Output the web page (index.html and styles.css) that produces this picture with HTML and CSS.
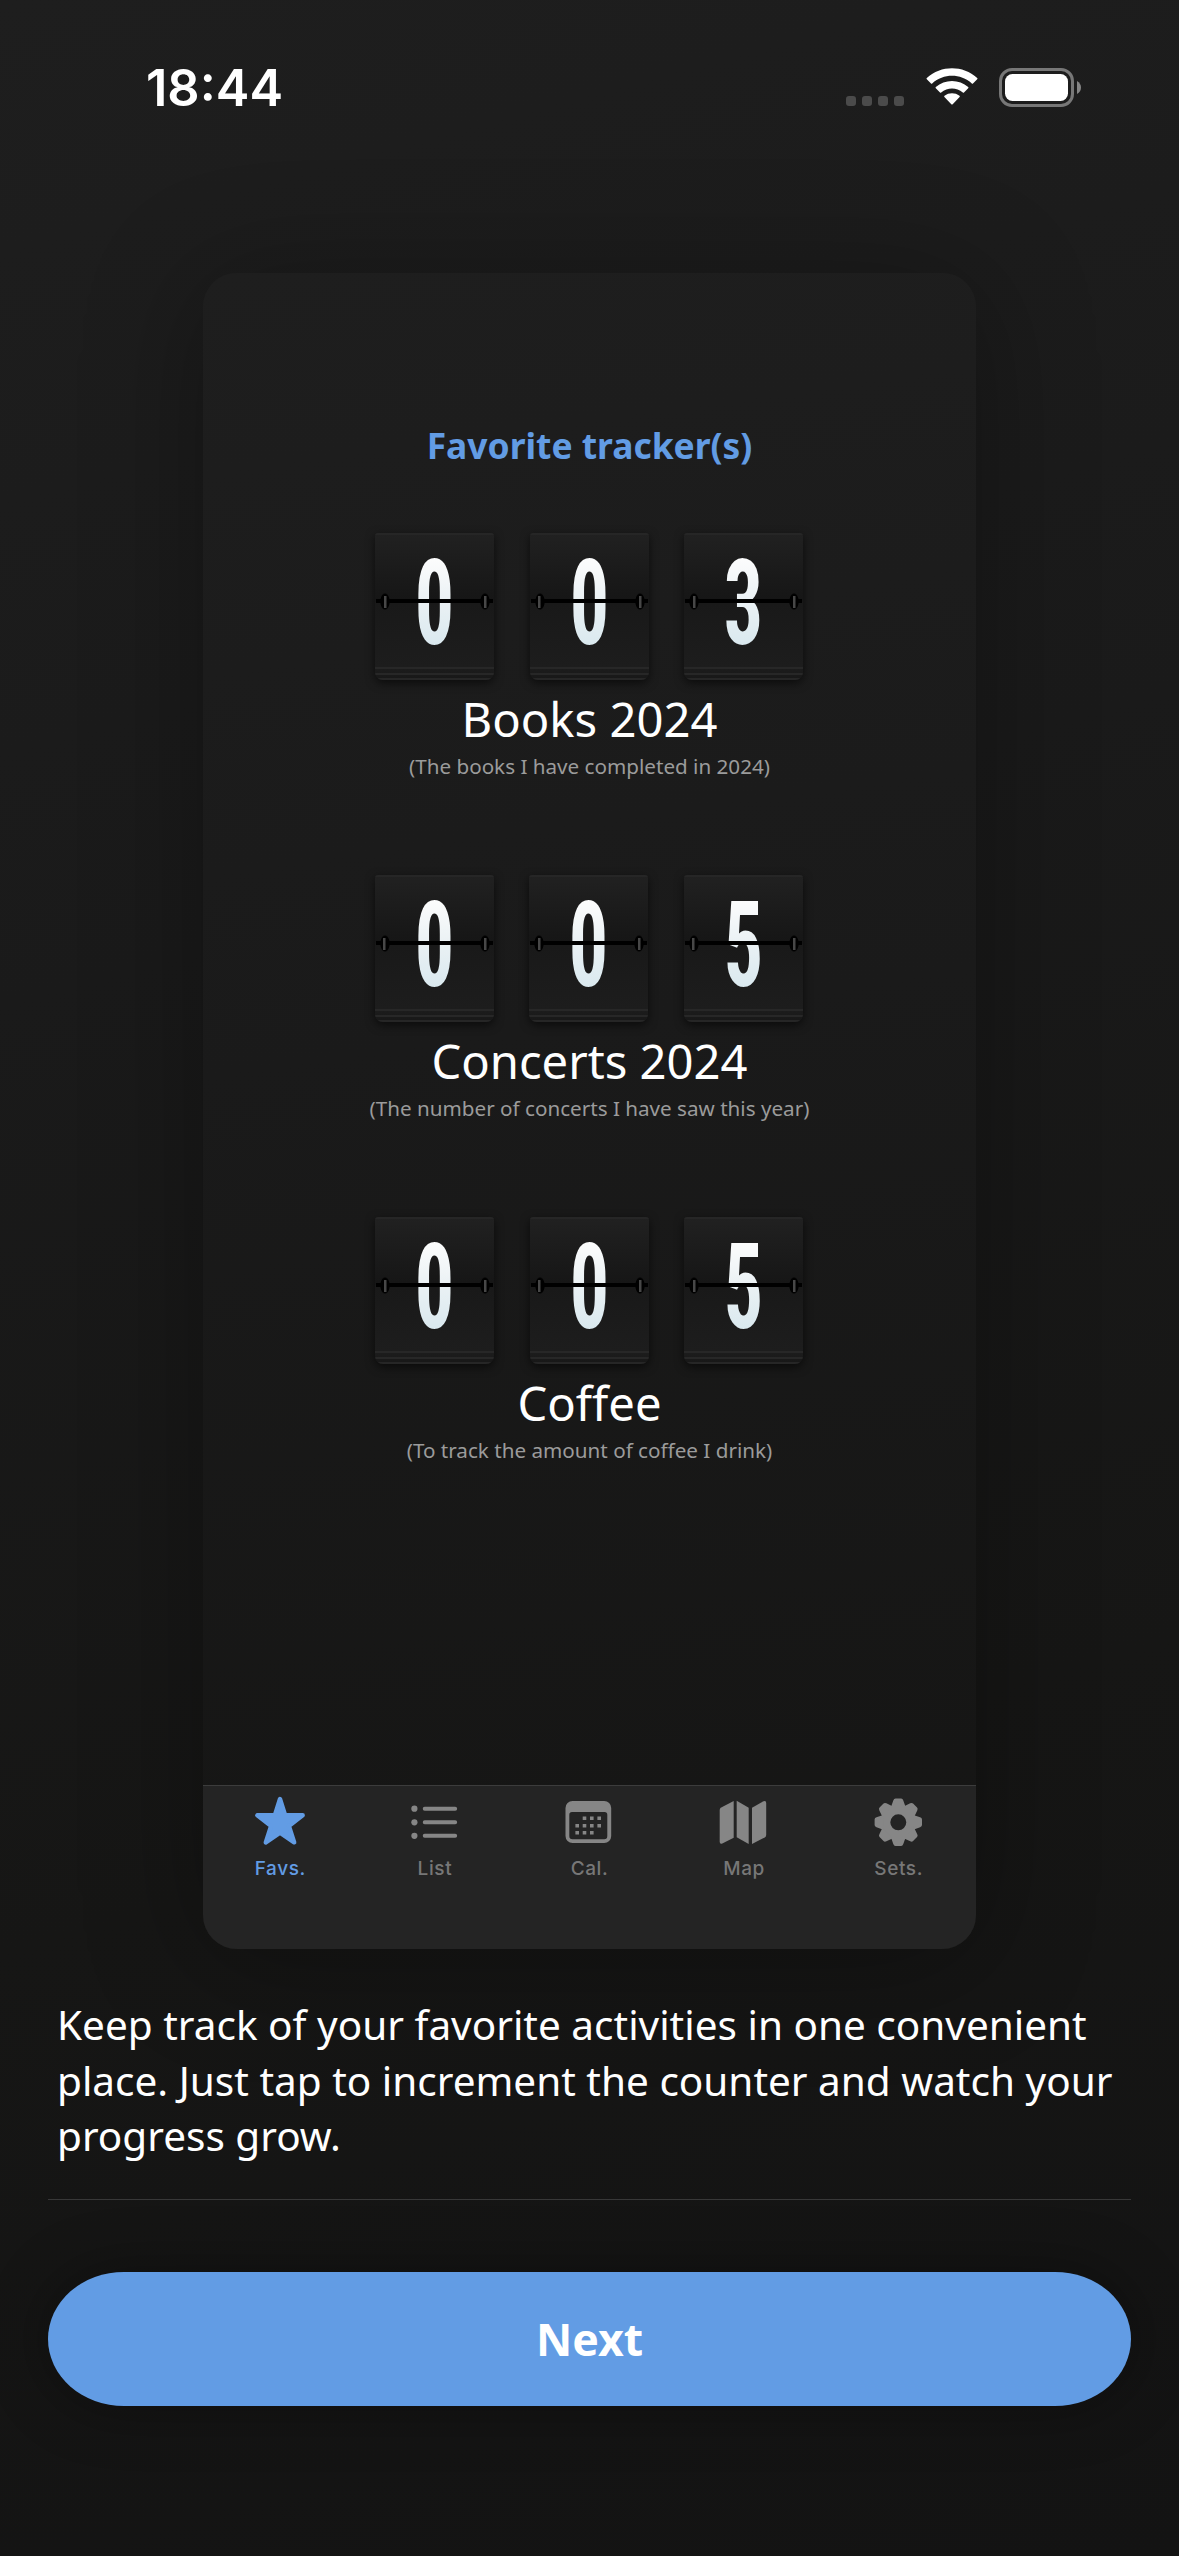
FILE: index.html
```html
<!DOCTYPE html>
<html lang="en">
<head>
<meta charset="utf-8">
<title>Favorite trackers</title>
<link rel="stylesheet" href="styles.css">
</head>
<body>
<div class="screen">
  <header class="status">
    <span class="time">18:44</span>
    <div class="indicators">
      <span class="signal"><i></i><i></i><i></i><i></i></span>
      <svg class="wifi" width="52" height="38" viewBox="0 0 52 38" fill="#fff">
        <path d="M0.8 11.2 Q0.2 10.6 0.8 10 C15 -3 37 -3 51.200 10 Q51.800 10.600 51.200 11.200 L47 15.400 Q46.400 16 45.800 15.400 C34.500 5.200 17.500 5.200 6.200 15.400 Q5.600 16 5 15.400 Z"/>
        <path d="M9.800 20.200 Q9.200 19.600 9.800 19 C18.800 11 33.200 11 42.200 19 Q42.800 19.600 42.200 20.200 L38 24.400 Q37.400 25 36.800 24.400 C30.600 19.200 21.400 19.200 15.200 24.400 Q14.600 25 14 24.400 Z"/>
        <path d="M18.400 29 Q17.800 28.400 18.500 27.800 C22.800 24.500 29.200 24.500 33.500 27.800 Q34.200 28.400 33.600 29 L26.700 36.200 Q26 36.900 25.300 36.200 Z"/>
      </svg>
      <svg class="battery" width="83" height="39" viewBox="0 0 83 39">
        <rect x="1.500" y="1.500" width="72" height="36" rx="11.500" fill="none" stroke="#777" stroke-width="3"/>
        <rect x="6" y="6" width="63" height="27" rx="7.500" fill="#fff"/>
        <path d="M78 13 Q82 15.500 82 19.500 Q82 23.500 78 26 Z" fill="#858585"/>
      </svg>
    </div>
  </header>

  <section class="preview">
    <div class="trackers">
      <h1>Favorite tracker(s)</h1>
      <div class="tracker">
        <div class="counter">
          <div class="flap"><span class="digit">0</span></div>
          <div class="flap"><span class="digit">0</span></div>
          <div class="flap"><span class="digit">3</span></div>
        </div>
        <h2>Books 2024</h2>
        <p>(The books I have completed in 2024)</p>
      </div>
      <div class="tracker">
        <div class="counter">
          <div class="flap"><span class="digit">0</span></div>
          <div class="flap"><span class="digit">0</span></div>
          <div class="flap"><span class="digit">5</span></div>
        </div>
        <h2>Concerts 2024</h2>
        <p>(The number of concerts I have saw this year)</p>
      </div>
      <div class="tracker">
        <div class="counter">
          <div class="flap"><span class="digit">0</span></div>
          <div class="flap"><span class="digit">0</span></div>
          <div class="flap"><span class="digit">5</span></div>
        </div>
        <h2>Coffee</h2>
        <p>(To track the amount of coffee I drink)</p>
      </div>
    </div>
    <nav class="tabs">
      <div class="tab active">
        <svg width="60" height="56" viewBox="0 0 60 56"><path d="M30 6 L35.200 22.300 L52.700 22.300 L38.900 32.900 L44.200 49.400 L30 39.600 L15.800 49.400 L21.100 32.900 L7.300 22.300 L24.800 22.300 Z" fill="currentColor" stroke="currentColor" stroke-width="4.400" stroke-linejoin="round"/></svg>
        <span>Favs.</span>
      </div>
      <div class="tab">
        <svg width="60" height="56" viewBox="0 0 60 56" fill="currentColor"><circle cx="9.400" cy="15.700" r="3.100"/><circle cx="9.400" cy="29.300" r="3.100"/><circle cx="9.400" cy="42.800" r="3.100"/><path d="M19.700 15.700H50.200M19.700 29.300H50.200M19.700 42.800H50.200" stroke="currentColor" stroke-width="3.900" stroke-linecap="round"/></svg>
        <span>List</span>
      </div>
      <div class="tab">
        <svg width="60" height="56" viewBox="0 0 60 56" fill="currentColor">
          <path fill-rule="evenodd" d="M13.500 8H45.200A7 7 0 0 1 52.200 15V43A7 7 0 0 1 45.200 50H13.500A7 7 0 0 1 6.500 43V15A7 7 0 0 1 13.500 8ZM13 19Q10.300 19 10.300 21.700V43Q10.300 46.200 13.500 46.200H45.200Q48.300 46.200 48.300 43V21.700Q48.300 19 45.600 19Z"/>
          <path d="M23.700 23.500h3.600v3.600h-3.600zM31 23.500h3.600v3.600h-3.600zM38.400 23.500h3.600v3.600h-3.600zM16.400 30.900h3.600v3.600h-3.600zM23.700 30.900h3.600v3.600h-3.600zM31 30.900h3.600v3.600h-3.600zM38.400 30.900h3.600v3.600h-3.600zM16.400 37.900h3.600v3.600h-3.600zM23.700 37.900h3.600v3.600h-3.600zM31 37.900h3.600v3.600h-3.600z"/>
        </svg>
        <span>Cal.</span>
      </div>
      <div class="tab">
        <svg width="60" height="56" viewBox="0 0 60 56" fill="currentColor">
          <path d="M19.700 8V44.700L8.300 50.500Q5.700 51.500 5.700 48.800V17Q5.700 15.400 7.200 14.500Z"/>
          <path d="M22.700 7.700L34.700 14.700V51L22.700 44.300Z"/>
          <path d="M38 14.700L49.500 8.300Q52.200 7.200 52.200 10V42Q52.200 43.600 50.800 44.400L38 51Z"/>
        </svg>
        <span>Map</span>
      </div>
      <div class="tab">
        <svg width="60" height="56" viewBox="0 0 60 56" fill="currentColor">
          <defs><path id="tooth" d="M-7.400 -15L-5 -21.800Q-4.400 -23.700 -2.800 -23.700H2.800Q4.400 -23.700 5 -21.800L7.400 -15Z"/></defs>
          <g transform="translate(29.300 29.300)">
            <circle r="12.700" fill="none" stroke="currentColor" stroke-width="9.400"/>
            <use href="#tooth"/><use href="#tooth" transform="rotate(45)"/><use href="#tooth" transform="rotate(90)"/><use href="#tooth" transform="rotate(135)"/><use href="#tooth" transform="rotate(180)"/><use href="#tooth" transform="rotate(225)"/><use href="#tooth" transform="rotate(270)"/><use href="#tooth" transform="rotate(315)"/>
          </g>
        </svg>
        <span>Sets.</span>
      </div>
    </nav>
  </section>

  <footer class="intro">
    <p>Keep track of your favorite activities in one convenient place. Just tap to increment the counter and watch your progress grow.</p>
    <button class="next" type="button">Next</button>
  </footer>
</div>
</body>
</html>
```
FILE: styles.css
```css
* {
  box-sizing: border-box;
}

body {
  margin: 0;
  background: #141413;
  color: #fff;
  font-family: "Noto Sans", sans-serif;
}

h1, h2, p {
  margin: 0;
}

svg {
  display: block;
}

.screen {
  display: flex;
  flex-direction: column;
  align-items: center;
  height: 2556px;
  overflow: hidden;
  background: linear-gradient(165deg, #1e1e1e 0%, #1a1a1a 35%, #161615 68%, #131313 100%);
}

/* Status bar */
.status {
  display: flex;
  justify-content: space-between;
  width: 100%;
  height: 273px;
  flex: none;
  padding: 58px 97px 0 146px;
}

.time {
  height: 60px;
  font: 580 50.500px/60px Inter, sans-serif;
}

.indicators {
  display: flex;
  height: 60px;
  padding-top: 10px;
}

.signal {
  display: flex;
  gap: 6px;
  padding-top: 28px;
  margin-right: 22px;
}

.signal i {
  width: 10px;
  height: 10px;
  border-radius: 3px;
  background: #4b4b4b;
}

.wifi {
  margin-right: 21px;
}

/* Preview card */
.preview {
  display: flex;
  flex-direction: column;
  width: 773px;
  height: 1676px;
  flex: none;
  border-radius: 34px;
  overflow: hidden;
  background: linear-gradient(172deg, #1e1e1e 0%, #1a1a1a 45%, #151514 100%);
  box-shadow: 0 12px 120px rgba(0, 0, 0, 0.32);
}

.trackers {
  display: flex;
  flex: 1;
  flex-direction: column;
  align-items: center;
  padding-top: 147px;
}

h1 {
  margin-bottom: 63px;
  color: #629ce4;
  font-size: 35.400px;
  font-weight: 700;
  line-height: 50px;
}

.tracker {
  height: 342px;
  text-align: center;
}

.counter {
  display: flex;
  justify-content: center;
  gap: 35.500px;
  margin: 0 1px 9px 0;
}

.flap {
  position: relative;
  width: 119px;
  height: 147px;
  border-radius: 3px 3px 8px 8px;
  text-align: center;
  background:
    linear-gradient(#262626, #262626) 0 0 / 100% 2px no-repeat,
    linear-gradient(#272727, #272727) 0 134px / 100% 2px no-repeat,
    linear-gradient(#272727, #272727) 0 140px / 100% 2px no-repeat,
    linear-gradient(#262626, #262626) 0 145px / 100% 2px no-repeat,
    linear-gradient(#212121 0, #161616 66px, #191919 70px, #1d1d1d 134px, #171717 147px);
  box-shadow: 0 3px 10px rgba(0, 0, 0, 0.600);
}

/* Hinge across the middle of a flap */
.flap::before {
  content: "";
  position: absolute;
  z-index: 1;
  top: 66px;
  left: 1px;
  right: 1px;
  height: 4px;
  background: #000;
}

.flap::after {
  content: "";
  position: absolute;
  z-index: 2;
  top: 60px;
  left: 5px;
  right: 4px;
  height: 17px;
  background:
    linear-gradient(#474747, #474747) 3.500px 50% / 2.500px 12px no-repeat,
    linear-gradient(#474747, #474747) calc(100% - 3.500px) 50% / 2.500px 12px no-repeat,
    radial-gradient(#000 60%, transparent 72%) 0 0 / 10px 100% no-repeat,
    radial-gradient(#000 60%, transparent 72%) 100% 0 / 10px 100% no-repeat;
}

.digit {
  display: block;
  padding-top: 1.500px;
  font: 700 118px/139.500px "Roboto Condensed", Roboto, sans-serif;
  color: transparent;
  background: linear-gradient(#fdfdfd 23px, #eaf1f4 68px, #dae9ef 112px);
  -webkit-background-clip: text;
  background-clip: text;
  transform: scaleX(0.660);
}

h2 {
  font-size: 47.200px;
  font-weight: 400;
  line-height: 60px;
}

.tracker p {
  margin-top: 3px;
  color: #9b9b9b;
  font-size: 20.650px;
  line-height: 28px;
}

/* Tab bar */
.tabs {
  display: flex;
  height: 164px;
  padding-top: 7px;
  border-top: 1px solid #3c3c3c;
  background: #242424;
}

.tab {
  display: flex;
  flex: 1;
  flex-direction: column;
  align-items: center;
  color: #868686;
}

.tab span {
  margin-top: 8px;
  color: #777;
  font: 450 19px/24px Inter, sans-serif;
  letter-spacing: 0.600px;
}

.tab.active,
.tab.active span {
  color: #629ce4;
}

/* Intro text and action */
.intro {
  display: flex;
  flex-direction: column;
  width: 1083px;
  margin-top: 48px;
}

.intro p {
  height: 203px;
  padding: 0 0 0 9px;
  border-bottom: 1px solid #383838;
  font-size: 40.500px;
  line-height: 55.700px;
}

.next {
  height: 134px;
  margin-top: 72px;
  padding: 0 0 2px;
  border: 0;
  border-radius: 76px / 67px;
  background: #629ce4;
  box-shadow: 0 0 60px rgba(0, 0, 0, 0.350);
  color: #fff;
  font: 700 44.600px "Noto Sans", sans-serif;
}
```
